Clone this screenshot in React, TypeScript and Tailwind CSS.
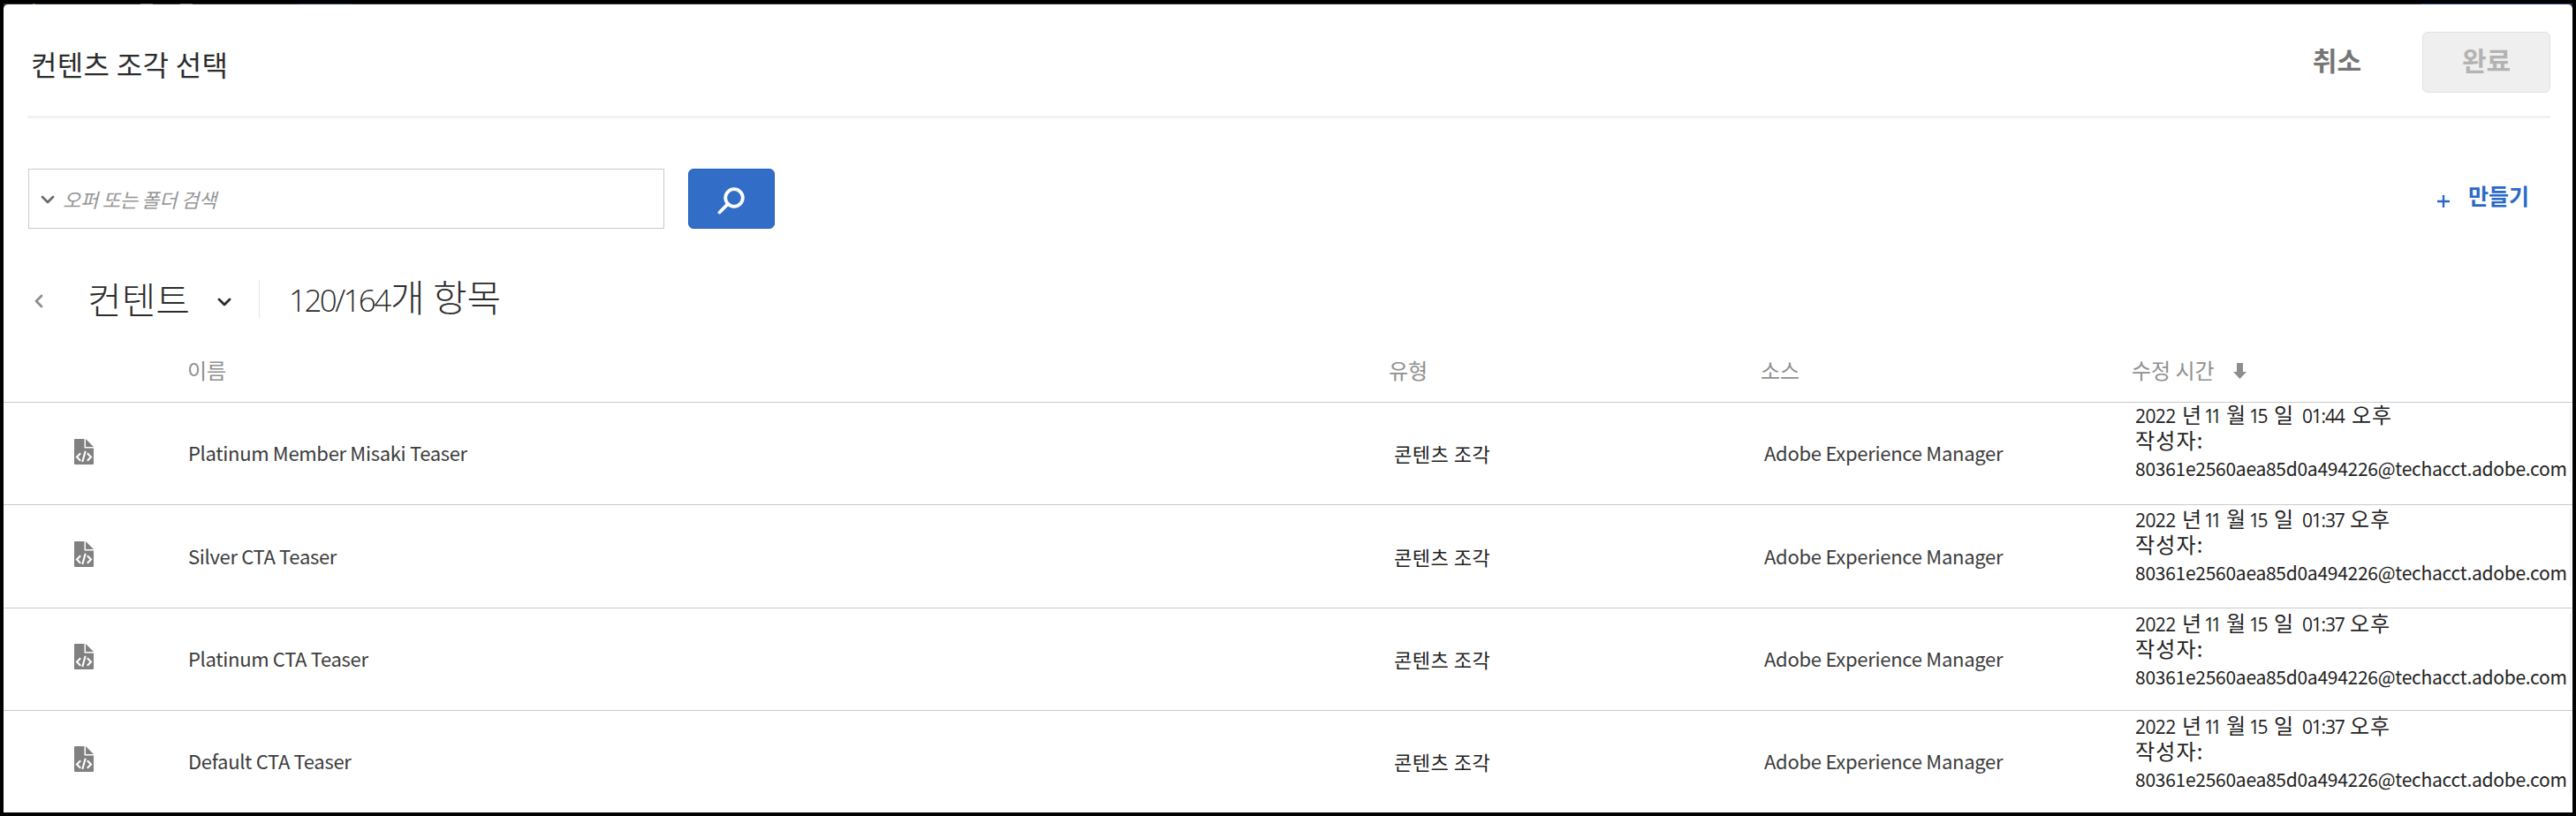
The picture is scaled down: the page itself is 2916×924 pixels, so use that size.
import type { ReactNode } from "react";

type Item = {
  name: string;
  time: string;
  height: string;
  textTop: string;
  iconTop: string;
  shift: string;
  timeWidth: string;
};

const items: Item[] = [
  { name: "Platinum Member Misaki Teaser", time: "01:44", height: "h-[116px]", textTop: "pt-[41px]", iconTop: "pt-[41px]", shift: "pt-0", timeWidth: "w-[56px]" },
  { name: "Silver CTA Teaser", time: "01:37", height: "h-[117px]", textTop: "pt-[42px]", iconTop: "pt-[41px]", shift: "pt-[2px]", timeWidth: "w-[54px]" },
  { name: "Platinum CTA Teaser", time: "01:37", height: "h-[116px]", textTop: "pt-[41px]", iconTop: "pt-[40px]", shift: "pt-[3px]", timeWidth: "w-[54px]" },
  { name: "Default CTA Teaser", time: "01:37", height: "h-[116px]", textTop: "pt-[41px]", iconTop: "pt-[40px]", shift: "pt-[3px]", timeWidth: "w-[54px]" },
];

const COLUMNS = "grid grid-cols-[208px_1360px_421px_420px_1fr]";

function ChevronDown({ className }: { className: string }) {
  return (
    <svg viewBox="0 0 16 10" className={className} fill="none" stroke="currentColor" strokeWidth="2.8" strokeLinecap="round" strokeLinejoin="round">
      <path d="M2 2l6 6 6-6" />
    </svg>
  );
}

function ChevronLeft() {
  return (
    <svg viewBox="0 0 10 16" className="mt-[5px] h-4 w-2.5 text-[#8e8e8e]" fill="none" stroke="currentColor" strokeWidth="2.8" strokeLinecap="round" strokeLinejoin="round">
      <path d="M8 2L2 8l6 6" />
    </svg>
  );
}

function FragmentIcon() {
  return (
    <svg viewBox="0 0 22 29" className="h-[29px] w-[22px]">
      <path d="M1 0h10.500v10.500H22V28a1 1 0 0 1-1 1H1a1 1 0 0 1-1-1V1a1 1 0 0 1 1-1z" fill="#808080" />
      <path d="M13 0l9 9h-9z" fill="#808080" />
      <g fill="none" stroke="#fff" strokeWidth="2.1">
        <path d="M7.2 16.200L3 20.500l4.200 4.300M14.800 16.200l4.200 4.300-4.200 4.300M12.700 13.800L9.300 26" />
      </g>
    </svg>
  );
}

function Num({ children, className }: { children: ReactNode; className: string }) {
  return <span className={`inline-block shrink-0 font-['Open_Sans'] text-[21px] ${className}`}>{children}</span>;
}

function Modified({ item }: { item: Item }) {
  return (
    <div className={`flex justify-between ${item.shift}`}>
      <div className="pl-[4px] text-[24px] leading-[26px] whitespace-nowrap text-[#222]">
        <div className="flex h-[28px] items-baseline">
          <Num className="w-[53px] tracking-[-0.6px]">2022</Num>
          <span className="w-[25px]">년</span>
          <Num className="w-[25px] tracking-[-4px]">11</Num>
          <span className="w-[26px]">월</span>
          <Num className="w-[28px] tracking-[-2.5px]">15</Num>
          <span className="w-[32px]">일</span>
          <Num className={`${item.timeWidth} tracking-[-1.2px]`}>{item.time}</Num>
          <span className="tracking-[1px]">오후</span>
        </div>
        <div className="h-[33px] pt-px tracking-[1.2px]">작성자:</div>
        <div className="text-[21px] tracking-[-0.27px]">80361e2560aea85d0a494226@techacct.adobe.com</div>
      </div>
      <div className="mt-[2px] mr-[2px] h-[88px] w-px bg-[#ececec]" />
    </div>
  );
}

function Row({ item }: { item: Item }) {
  return (
    <div className={`${COLUMNS} ${item.height} border-t border-[#cacaca]`}>
      <div className={`${item.iconTop} pl-[80px]`}>
        <FragmentIcon />
      </div>
      <div className={`${item.textTop} pl-px text-[22px] leading-[30px] tracking-[-0.31px] text-[#3c3c3c]`}>{item.name}</div>
      <div className={`${item.textTop} pl-[6px] text-[22px] leading-[33px] tracking-[0.5px] text-[#222]`}>콘텐츠 조각</div>
      <div className={`${item.textTop} pl-[4px] text-[22px] leading-[30px] tracking-[-0.28px] text-[#3c3c3c]`}>Adobe Experience Manager</div>
      <Modified item={item} />
    </div>
  );
}

export default function App() {
  return (
    <div className="h-[924px] w-[2916px] overflow-hidden bg-black px-1 pt-1 pb-1 font-['Noto_Sans_CJK_KR','Noto_Sans',sans-serif]">
      <div className="flex h-full flex-col bg-[#333]">
        <div className="flex h-px shrink-0">
          <div className="ml-[33px] w-[3px] bg-[#b8692c]" />
          <div className="ml-[119px] w-[14px] bg-[#777]" />
          <div className="ml-[31px] w-[14px] bg-[#777]" />
          <div className="ml-[119px] w-[60px] bg-[#263f66]" />
          <div className="ml-auto w-[171px] bg-[#1f4c93]" />
        </div>
        <div className="flex flex-1 flex-col rounded-t-[5px] bg-white">
          <header className="mr-[25px] ml-[27px] flex h-[129px] shrink-0 items-start justify-between border-b-[3px] border-[#f2f2f2]">
            <h1 className="pt-[46px] pl-1 text-[32px] leading-[42px] tracking-[0.3px] text-[#2c2c2c]">컨텐츠 조각 선택</h1>
            <div className="flex items-start pt-[31px] text-[30px] font-bold">
              <button className="mr-[69px] leading-[62px] text-[#757575]">취소</button>
              <button className="h-[69px] w-[145px] rounded-[6px] border border-[#e1e1e1] bg-[#efefef] pb-[8px] leading-[58px] text-[#b3b3b3]">완료</button>
            </div>
          </header>

          <div className="mt-[57px] flex h-[68px] shrink-0 items-center pr-[49px] pl-[28px]">
            <div className="flex h-[68px] w-[720px] items-center border border-[#cacaca] pl-[13px]">
              <ChevronDown className="mt-[2px] h-[10px] w-4 text-[#6e6e6e]" />
              <span className="ml-[9px] text-[22px] leading-[30px] tracking-[-0.25px] text-[#959595] italic">오퍼 또는 폴더 검색</span>
            </div>
            <button className="ml-[27px] flex h-[68px] w-[98px] items-center justify-center rounded-[6px] border border-[#1f5fc0] bg-[#326ec8]">
              <svg viewBox="0 0 32 32" className="mt-[3px] h-8 w-8" fill="none" stroke="#fff" strokeWidth="3.8" strokeLinecap="round">
                <circle cx="19" cy="13" r="9.8" />
                <path d="M11.800 20.200L2.500 29.500" />
              </svg>
            </button>
            <button className="ml-auto flex items-center text-[25px] font-bold text-[#2b69c7]">
              <svg viewBox="0 0 14 14" className="mt-[5px] mr-[21px] h-[14px] w-[14px]" stroke="currentColor" strokeWidth="2.4">
                <path d="M7 0v14M0 7h14" />
              </svg>
              <span className="mb-[8px] leading-[30px]">만들기</span>
            </button>
          </div>

          <div className="mt-[49px] flex h-[60px] shrink-0 items-center pl-[35px] text-[42px] leading-[60px] font-extralight text-[#2c2c2c]">
            <ChevronLeft />
            <span className="ml-[50px] w-[149px]">컨텐트</span>
            <ChevronDown className="mt-[7px] -ml-[2px] h-[10px] w-4" />
            <div className="ml-[31px] h-[43px] w-px bg-[#e6e6e6]" />
            <span className="ml-[33px] -mt-[2px] flex items-baseline">
              <span className="w-[115px] shrink-0 font-['Open_Sans'] text-[35px] font-light tracking-[-2.6px]">120/164</span>
              <span>개 항목</span>
            </span>
          </div>

          <div className={`${COLUMNS} h-[87px] shrink-0 pt-[36px] text-[24px] leading-[30px] text-[#909090]`}>
            <span />
            <span>이름</span>
            <span>유형</span>
            <span>소스</span>
            <span className="flex">
              수정 시간
              <svg viewBox="0 0 15 18" className="mt-[7px] ml-[21px] h-[18px] w-[15px]" fill="#8e8e8e">
                <path d="M4 0h7v10h4l-7.500 8L0 10h4z" />
              </svg>
            </span>
          </div>

          <div className="flex flex-col">
            {items.map((item) => (
              <Row key={item.name} item={item} />
            ))}
          </div>
        </div>
      </div>
    </div>
  );
}
